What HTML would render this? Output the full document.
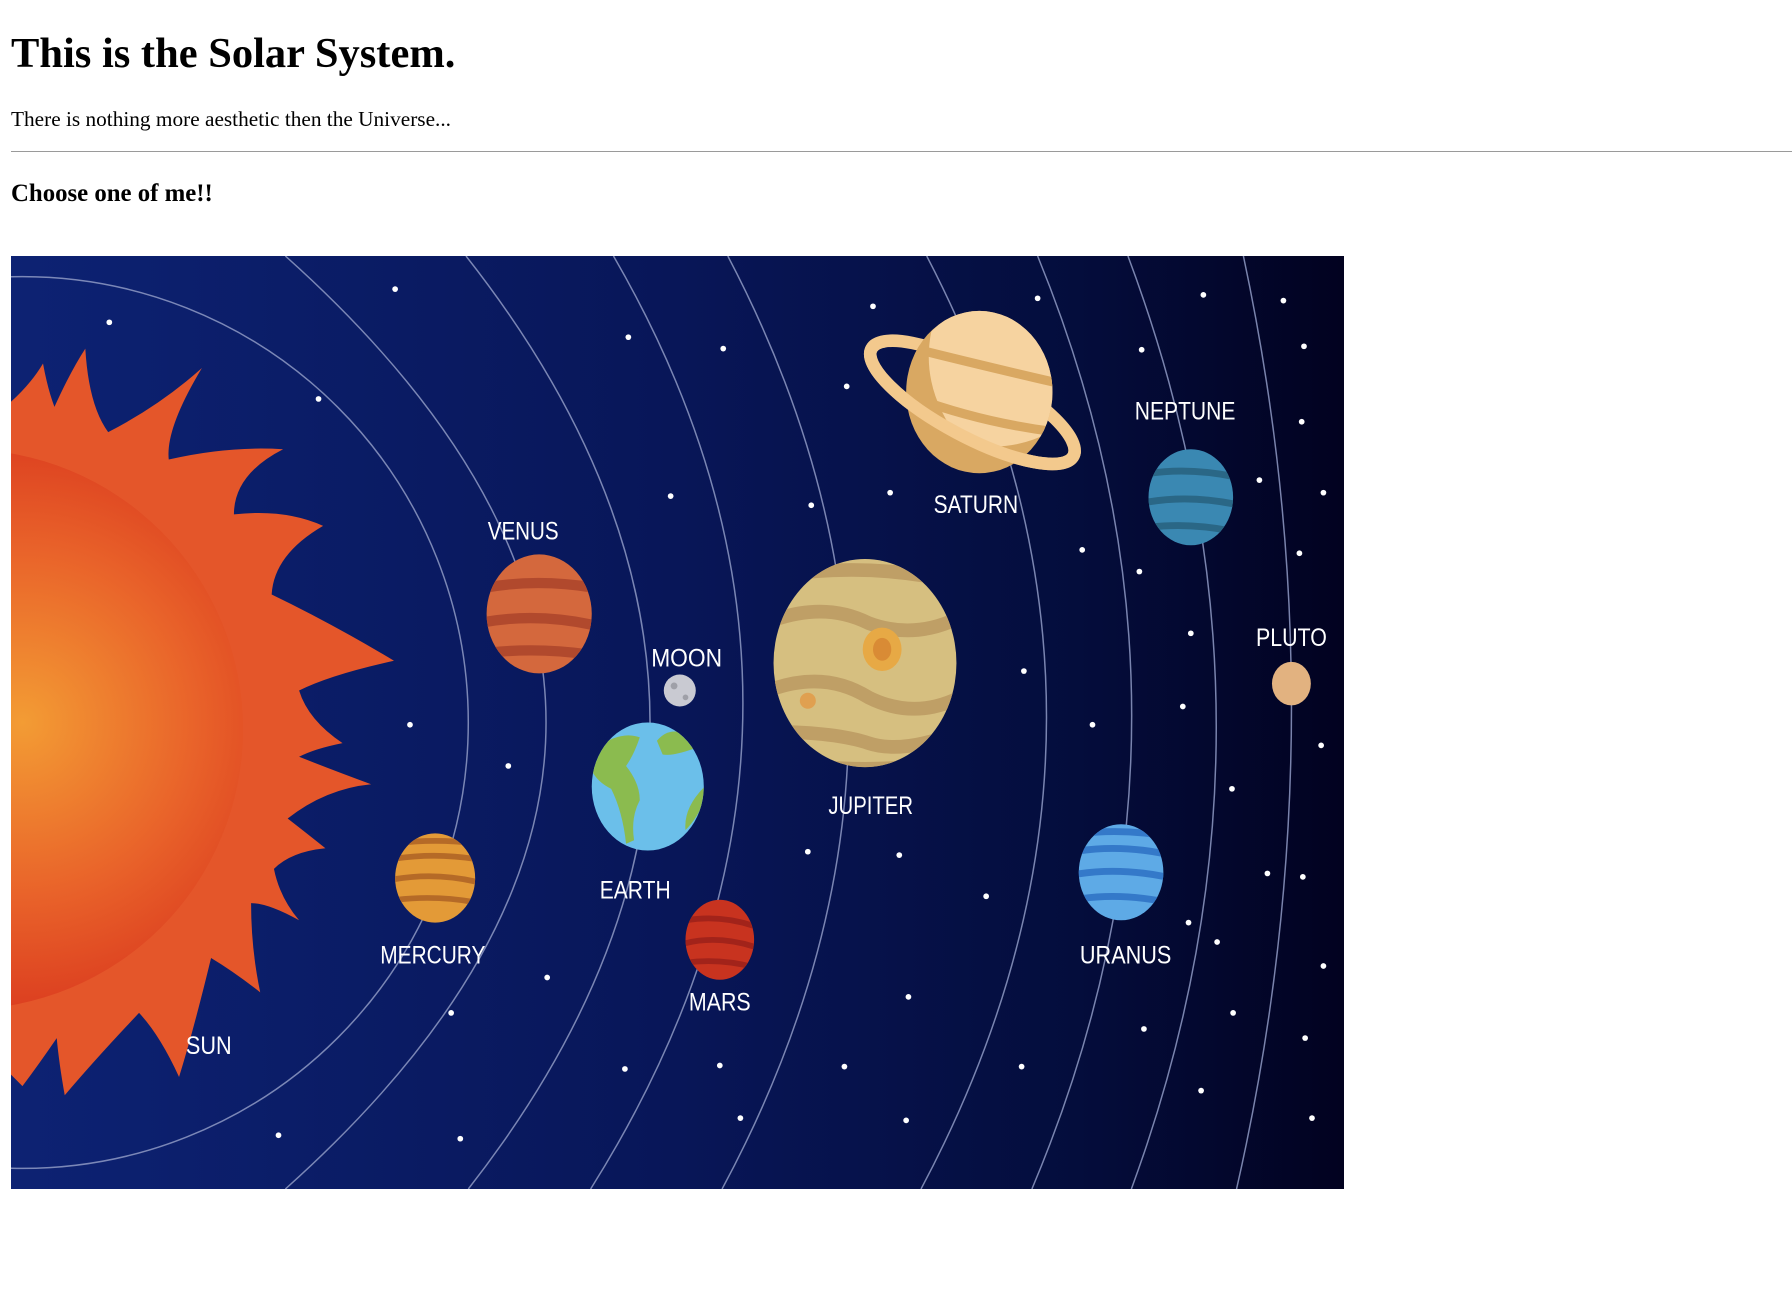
<!DOCTYPE html>
<html><head><meta charset="utf-8"><style>
html,body{margin:0;padding:0;background:#fff;width:1792px;height:1302px;overflow:hidden;position:relative}
.t{position:absolute;left:11px;margin:0;font-family:"Liberation Serif",serif;color:#000;white-space:nowrap}
h1.t{font-size:42.5px;line-height:42.5px;top:33px;font-weight:bold}
p.t{font-size:21.3px;line-height:21.3px;top:109px}
h3.t{font-size:24.8px;line-height:24.8px;top:182px;font-weight:bold}
.hr{position:absolute;left:11px;right:0;top:151px;height:1px;background:#9a9a9a}
svg{position:absolute;left:11px;top:256px}
svg text{font-family:"Liberation Sans",sans-serif;fill:#fff;font-size:22px;text-anchor:middle}
</style></head><body>
<h1 class="t">This is the Solar System.</h1>
<p class="t">There is nothing more aesthetic then the Universe...</p>
<div class="hr"></div>
<h3 class="t">Choose one of me!!</h3>
<svg width="1333" height="933" viewBox="10 224 1166 816" preserveAspectRatio="none">
<defs>
<linearGradient id="bg" x1="0" x2="1" y1="0" y2="0">
<stop offset="0" stop-color="#0d2273"/><stop offset="0.5" stop-color="#081658"/><stop offset="0.8" stop-color="#040d3c"/><stop offset="1" stop-color="#020220"/>
</linearGradient>
<radialGradient id="sun" cx="20" cy="632" r="250" gradientUnits="userSpaceOnUse">
<stop offset="0" stop-color="#f39c34"/><stop offset="0.6" stop-color="#e9632a"/><stop offset="1" stop-color="#dc3f20"/>
</radialGradient>
<clipPath id="cl"><rect x="10" y="224" width="1166" height="816"/></clipPath>
<clipPath id="cMe"><ellipse cx="381" cy="768" rx="35" ry="39"/></clipPath>
<clipPath id="cVe"><ellipse cx="472" cy="537" rx="46" ry="52"/></clipPath>
<clipPath id="cEa"><ellipse cx="567" cy="688" rx="49" ry="56"/></clipPath>
<clipPath id="cMa"><ellipse cx="630" cy="822" rx="30" ry="35"/></clipPath>
<clipPath id="cJu"><ellipse cx="757" cy="580" rx="80" ry="91"/></clipPath>
<clipPath id="cSa"><ellipse cx="857" cy="343" rx="64" ry="71"/></clipPath>
<clipPath id="cNe"><ellipse cx="1042" cy="435" rx="37" ry="42"/></clipPath>
<clipPath id="cUr"><ellipse cx="981" cy="763" rx="37" ry="42"/></clipPath>
<clipPath id="cRingFront"><rect x="700" y="345" width="300" height="120"/></clipPath>
</defs>
<g clip-path="url(#cl)">
<rect x="10" y="224" width="1166" height="816" fill="url(#bg)"/>
<g fill="none" stroke="#8f9ac4" stroke-width="1.3" opacity="0.85">
<circle cx="20" cy="632" r="390"/>
<path d="M250 224 Q706 632 250 1040"/>
<path d="M408 224 Q729 632 410 1040"/>
<path d="M537 224 Q773 632 517 1040"/>
<path d="M637 224 Q851 632 632 1040"/>
<path d="M811 224 Q1023 632 806 1040"/>
<path d="M908 224 Q1075 632 903 1040"/>
<path d="M987 224 Q1140 632 990 1040"/>
<path d="M1088 224 Q1175 632 1082 1040"/>
</g>
<g fill="#fff">
<circle cx="96" cy="282" r="2.5"/><circle cx="346" cy="253" r="2.5"/><circle cx="279" cy="349" r="2.5"/><circle cx="550" cy="295" r="2.5"/><circle cx="633" cy="305" r="2.5"/><circle cx="587" cy="434" r="2.5"/><circle cx="710" cy="442" r="2.5"/><circle cx="741" cy="338" r="2.5"/><circle cx="779" cy="431" r="2.5"/><circle cx="764" cy="268" r="2.5"/><circle cx="908" cy="261" r="2.5"/><circle cx="999" cy="306" r="2.5"/><circle cx="1053" cy="258" r="2.5"/><circle cx="1123" cy="263" r="2.5"/><circle cx="1141" cy="303" r="2.5"/><circle cx="1139" cy="369" r="2.5"/><circle cx="1102" cy="420" r="2.5"/><circle cx="1158" cy="431" r="2.5"/><circle cx="947" cy="481" r="2.5"/><circle cx="997" cy="500" r="2.5"/><circle cx="1137" cy="484" r="2.5"/><circle cx="1042" cy="554" r="2.5"/><circle cx="896" cy="587" r="2.5"/><circle cx="1035" cy="618" r="2.5"/><circle cx="956" cy="634" r="2.5"/><circle cx="1156" cy="652" r="2.5"/><circle cx="1078" cy="690" r="2.5"/><circle cx="359" cy="634" r="2.5"/><circle cx="445" cy="670" r="2.5"/><circle cx="707" cy="745" r="2.5"/><circle cx="787" cy="748" r="2.5"/><circle cx="863" cy="784" r="2.5"/><circle cx="1109" cy="764" r="2.5"/><circle cx="1140" cy="767" r="2.5"/><circle cx="1040" cy="807" r="2.5"/><circle cx="1065" cy="824" r="2.5"/><circle cx="1158" cy="845" r="2.5"/><circle cx="1079" cy="886" r="2.5"/><circle cx="1001" cy="900" r="2.5"/><circle cx="1142" cy="908" r="2.5"/><circle cx="1051" cy="954" r="2.5"/><circle cx="1148" cy="978" r="2.5"/><circle cx="479" cy="855" r="2.5"/><circle cx="395" cy="886" r="2.5"/><circle cx="547" cy="935" r="2.5"/><circle cx="630" cy="932" r="2.5"/><circle cx="739" cy="933" r="2.5"/><circle cx="795" cy="872" r="2.5"/><circle cx="894" cy="933" r="2.5"/><circle cx="648" cy="978" r="2.5"/><circle cx="793" cy="980" r="2.5"/><circle cx="403" cy="996" r="2.5"/><circle cx="244" cy="993" r="2.5"/>
</g>
<path fill="#e4562a" d="M0 360 Q25 340 38 318 Q42 340 48 356 Q62 325 75 305 Q78 355 95 378 Q140 355 177 322 Q145 375 148 402 Q200 390 248 393 Q205 415 205 450 Q250 445 283 460 Q240 485 238 520 Q290 545 345 578 Q290 590 262 604 Q270 630 300 650 Q275 655 262 662 Q295 675 325 686 Q285 690 252 716 Q270 730 285 742 Q255 745 240 760 Q245 785 262 805 Q235 790 220 790 Q220 830 228 868 Q205 850 185 838 Q170 900 157 942 Q140 905 122 886 Q85 925 57 958 Q52 930 50 908 Q35 930 20 950 L0 930 Z"/>
<circle cx="-32" cy="638" r="245" fill="url(#sun)"/>
<ellipse cx="381" cy="768" rx="35" ry="39" fill="#e39a37"/>
<g clip-path="url(#cMe)" stroke="#b56a27" stroke-width="5" fill="none"><path d="M340 752 Q380 745 420 752"/><path d="M340 770 Q380 762 420 772"/><path d="M340 788 Q380 782 420 790"/><path d="M345 738 Q380 733 420 738"/></g>
<ellipse cx="472" cy="537" rx="46" ry="52" fill="#d4683d"/>
<g clip-path="url(#cVe)" stroke="#b1492d" stroke-width="9" fill="none"><path d="M420 515 Q470 505 525 515"/><path d="M420 545 Q470 535 525 548"/><path d="M420 572 Q470 565 525 574"/></g>
<circle cx="595" cy="604" r="14" fill="#c9cad2"/><circle cx="590" cy="600" r="3" fill="#9fa0a8"/><circle cx="600" cy="610" r="2.5" fill="#9fa0a8"/>
<ellipse cx="567" cy="688" rx="49" ry="56" fill="#6bbfea"/>
<g clip-path="url(#cEa)" fill="#8bbb4f">
<path d="M515 660 Q540 638 560 645 Q555 660 548 670 Q560 685 560 700 Q552 715 555 735 L548 738 Q545 710 535 690 Q515 680 515 660Z"/>
<path d="M575 648 Q590 630 615 652 Q590 662 580 660Z"/>
<path d="M620 685 Q616 710 600 726 Q598 705 620 685Z"/>
</g>
<ellipse cx="630" cy="822" rx="30" ry="35" fill="#c8331f"/>
<g clip-path="url(#cMa)" stroke="#a2231a" stroke-width="5" fill="none"><path d="M600 805 Q630 800 660 810"/><path d="M600 825 Q628 818 660 828"/><path d="M600 842 Q630 838 660 846"/></g>
<ellipse cx="757" cy="580" rx="80" ry="91" fill="#d6bf80"/>
<g clip-path="url(#cJu)" stroke="#bf9f66" stroke-width="12" fill="none"><path d="M670 545 Q720 525 760 545 Q800 560 840 540"/><path d="M670 605 Q720 585 760 610 Q800 630 840 610"/><path d="M670 640 Q730 640 760 650 Q790 660 840 640"/><path d="M670 505 Q760 490 840 510"/><path d="M670 665 Q760 680 840 665"/></g>
<ellipse cx="772" cy="568" rx="17" ry="19" fill="#e7a945"/><ellipse cx="772" cy="568" rx="8" ry="10" fill="#d98b35"/>
<circle cx="707" cy="613" r="7" fill="#e0a050"/>
<ellipse cx="851" cy="352" rx="100" ry="30" transform="rotate(28 851 352)" fill="none" stroke="#f3c98d" stroke-width="11"/>
<ellipse cx="857" cy="343" rx="64" ry="71" fill="#d9a862"/>
<g clip-path="url(#cSa)">
<path fill="#f6d3a0" d="M815 290 Q850 255 895 280 Q930 320 925 375 Q880 400 840 385 Q805 340 815 290Z"/>
<g stroke="#d9a862" stroke-width="8" fill="none"><path d="M800 305 Q860 320 925 335"/><path d="M800 348 Q860 370 925 378"/></g>
</g>
<ellipse clip-path="url(#cRingFront)" cx="851" cy="352" rx="100" ry="30" transform="rotate(28 851 352)" fill="none" stroke="#f3c98d" stroke-width="11"/>
<ellipse cx="1042" cy="435" rx="37" ry="42" fill="#3a88b2"/>
<g clip-path="url(#cNe)" stroke="#2a6786" stroke-width="6" fill="none"><path d="M1000 415 Q1040 408 1085 418"/><path d="M1000 440 Q1040 432 1085 442"/><path d="M1000 462 Q1040 456 1085 466"/></g>
<ellipse cx="981" cy="763" rx="37" ry="42" fill="#5eaae6"/>
<g clip-path="url(#cUr)" stroke="#3479c9" stroke-width="6" fill="none"><path d="M940 745 Q980 738 1025 748"/><path d="M940 765 Q980 758 1025 768"/><path d="M940 787 Q980 780 1025 790"/><path d="M940 730 Q980 724 1025 732"/></g>
<ellipse cx="1130" cy="598" rx="17" ry="19" fill="#e2b280"/>
<text x="458" y="472" textLength="62" lengthAdjust="spacingAndGlyphs">VENUS</text>
<text x="601" y="583" textLength="62" lengthAdjust="spacingAndGlyphs">MOON</text>
<text x="854" y="449" textLength="74" lengthAdjust="spacingAndGlyphs">SATURN</text>
<text x="1037" y="367" textLength="88" lengthAdjust="spacingAndGlyphs">NEPTUNE</text>
<text x="1130" y="565" textLength="62" lengthAdjust="spacingAndGlyphs">PLUTO</text>
<text x="762" y="712" textLength="74" lengthAdjust="spacingAndGlyphs">JUPITER</text>
<text x="556" y="786" textLength="62" lengthAdjust="spacingAndGlyphs">EARTH</text>
<text x="379" y="843" textLength="92" lengthAdjust="spacingAndGlyphs">MERCURY</text>
<text x="630" y="884" textLength="54" lengthAdjust="spacingAndGlyphs">MARS</text>
<text x="985" y="843" textLength="80" lengthAdjust="spacingAndGlyphs">URANUS</text>
<text x="183" y="922" textLength="40" lengthAdjust="spacingAndGlyphs">SUN</text>
</g>
</svg>
</body></html>
